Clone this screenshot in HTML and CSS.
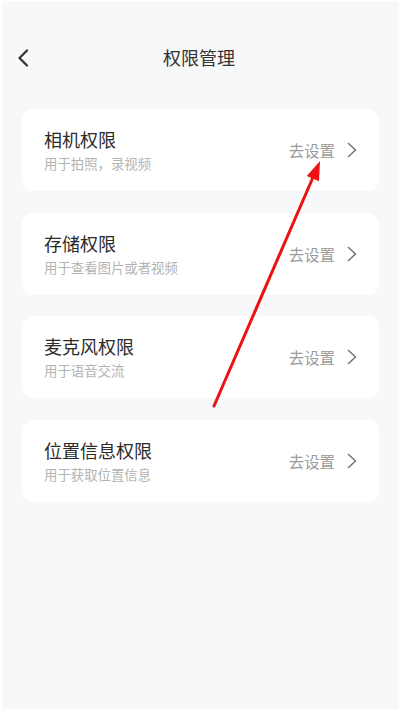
FILE: index.html
```html
<!DOCTYPE html>
<html lang="zh-CN">
<head>
<meta charset="utf-8">
<title>权限管理</title>
<link rel="stylesheet" href="styles.css">
</head>
<body>
<div class="page">
  <header class="nav">
    <svg class="back" width="12" height="18" viewBox="0 0 12 18"><path d="M10 1.5 L2.5 9 L10 16.5" fill="none" stroke="#333" stroke-width="2.2" stroke-linecap="round" stroke-linejoin="round"/></svg>
    <h1 class="nav-title">权限管理</h1>
  </header>
  <main class="list">
    <div class="card">
      <div class="info">
        <div class="name">相机权限</div>
        <div class="desc">用于拍照，录视频</div>
      </div>
      <div class="action"><span>去设置</span><svg class="chev" width="10" height="16" viewBox="0 0 10 16"><path d="M1.5 1.5 L8.5 8 L1.5 14.5" fill="none" stroke="#777" stroke-width="1.6" stroke-linecap="round" stroke-linejoin="round"/></svg></div>
    </div>
    <div class="card">
      <div class="info">
        <div class="name">存储权限</div>
        <div class="desc">用于查看图片或者视频</div>
      </div>
      <div class="action"><span>去设置</span><svg class="chev" width="10" height="16" viewBox="0 0 10 16"><path d="M1.5 1.5 L8.5 8 L1.5 14.5" fill="none" stroke="#777" stroke-width="1.6" stroke-linecap="round" stroke-linejoin="round"/></svg></div>
    </div>
    <div class="card">
      <div class="info">
        <div class="name">麦克风权限</div>
        <div class="desc">用于语音交流</div>
      </div>
      <div class="action"><span>去设置</span><svg class="chev" width="10" height="16" viewBox="0 0 10 16"><path d="M1.5 1.5 L8.5 8 L1.5 14.5" fill="none" stroke="#777" stroke-width="1.6" stroke-linecap="round" stroke-linejoin="round"/></svg></div>
    </div>
    <div class="card">
      <div class="info">
        <div class="name">位置信息权限</div>
        <div class="desc">用于获取位置信息</div>
      </div>
      <div class="action"><span>去设置</span><svg class="chev" width="10" height="16" viewBox="0 0 10 16"><path d="M1.5 1.5 L8.5 8 L1.5 14.5" fill="none" stroke="#777" stroke-width="1.6" stroke-linecap="round" stroke-linejoin="round"/></svg></div>
    </div>
  </main>
  <svg class="arrow" width="400" height="711" viewBox="0 0 400 711">
    <line x1="214" y1="406" x2="314" y2="175" stroke="#ee1111" stroke-width="3" stroke-linecap="round"/>
    <polygon points="320,161 306.8,176 319,181.2" fill="#ee1111"/>
  </svg>
</div>
</body>
</html>
```

FILE: styles.css
```css
* { box-sizing: border-box; }
html, body {
  margin: 0;
  padding: 0;
  background: #ffffff;
}
body {
  font-family: "Noto Sans CJK SC", "Noto Sans", sans-serif;
  color: #333;
}
.page {
  position: relative;
  width: 397px;
  height: 708px;
  margin: 1px 1px 2px 2px;
  background: #f7f8fa;
  overflow: hidden;
}
.nav {
  position: relative;
  display: flex;
  justify-content: center;
  align-items: flex-start;
  padding-top: 34px;
  height: 114px;
}
.back {
  position: absolute;
  left: 15px;
  top: 48px;
}
.nav-title {
  margin: 10px 0 0 -3px;
  font-size: 18px;
  font-weight: 400;
  line-height: 24px;
  color: #333;
}
.list {
  display: flex;
  flex-direction: column;
  gap: 21.5px;
  padding: 0 20px;
  margin-top: -6px;
}
.card {
  height: 82px;
  background: #ffffff;
  border-radius: 11px;
  display: flex;
  align-items: center;
  justify-content: space-between;
  padding: 0 22px;
}
.info {
  display: flex;
  flex-direction: column;
}
.name {
  font-size: 18px;
  line-height: 24px;
  color: #2b2b2b;
}
.desc {
  font-size: 13.4px;
  line-height: 20px;
  margin-top: 2px;
  color: #b3b3b3;
}
.action {
  display: flex;
  align-items: center;
  gap: 12px;
  margin-top: 0;
}
.action span {
  font-size: 15.4px;
  line-height: 20px;
  color: #9a9a9a;
}
.chev { display: block; }
.arrow {
  position: absolute;
  left: -2px;
  top: -1px;
  pointer-events: none;
}
```
